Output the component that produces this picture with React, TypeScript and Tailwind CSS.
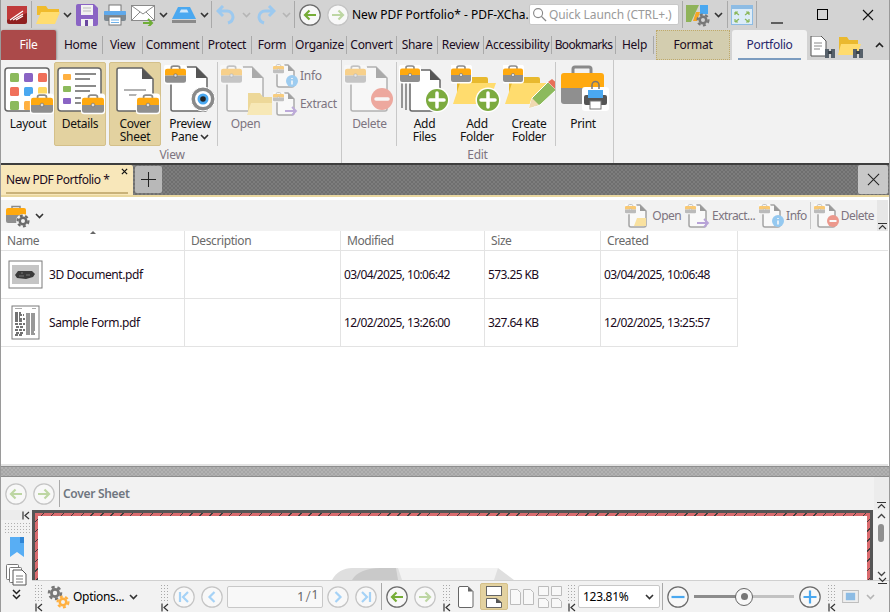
import type { ReactNode } from 'react';

const Case = ({ x, y, s = 1 }: { x: number; y: number; s?: number }) => (
  <g transform={`translate(${x} ${y}) scale(${s})`}>
    <rect x="-1" y="-0.5" width="22" height="19" rx="3" fill="#fff" />
    <path d="M6 4V2.500C6 1.500 7 1 8 1h4c1 0 2 .5 2 1.500V4" fill="none" stroke="#8a8a8a" strokeWidth="1.600" />
    <path d="M0 5.500a2 2 0 0 1 2-2h16a2 2 0 0 1 2 2V10H0z" fill="#ffa90f" />
    <path d="M0 10h20v5a2 2 0 0 1-2 2H2a2 2 0 0 1-2-2z" fill="#8f8f8f" />
    <rect x="8.500" y="8.500" width="3" height="3" rx="1" fill="#ddd" stroke="#666" strokeWidth=".6" />
  </g>
);

const Page = ({ x, y, w, h, c = 10 }: { x: number; y: number; w: number; h: number; c?: number }) => (
  <g>
    <path
      d={`M${x + 2} ${y}H${x + w - c}L${x + w} ${y + c}V${y + h - 2}a2 2 0 0 1-2 2H${x + 2}a2 2 0 0 1-2-2V${y + 2}a2 2 0 0 1 2-2z`}
      fill="#fff"
      stroke="#666"
      strokeWidth="1.500"
    />
    <path d={`M${x + w - c} ${y}L${x + w} ${y + c}H${x + w - c}z`} fill="#555" />
  </g>
);

const Plus = ({ x, y, r = 11 }: { x: number; y: number; r?: number }) => (
  <g>
    <circle cx={x} cy={y} r={r + 1.500} fill="#fff" />
    <circle cx={x} cy={y} r={r} fill="#7cab3f" />
    <path d={`M${x - r + 4} ${y}H${x + r - 4}M${x} ${y - r + 4}V${y + r - 4}`} stroke="#fff" strokeWidth="3.500" strokeLinecap="round" />
  </g>
);

const Folder = ({ x, y }: { x: number; y: number }) => (
  <g transform={`translate(${x} ${y})`}>
    <path d="M4 4h12l3 4h14a2 2 0 0 1 2 2v22H4z" fill="#e8b92e" />
    <path d="M7 14h36l-8 21H0z" fill="#ffdc6e" />
  </g>
);

const Gear = ({ cx, cy, r, color }: { cx: number; cy: number; r: number; color: string }) => (
  <g>
    <circle cx={cx} cy={cy} r={r * 1.2} fill="none" stroke={color} strokeWidth={r * 0.5} strokeDasharray={`${r * 0.65} ${r * 0.55}`} />
    <circle cx={cx} cy={cy} r={r * 0.72} fill="none" stroke={color} strokeWidth={r * 0.55} />
  </g>
);

const Binoculars = () => (
  <g>
    <path d="M15 13h4v9h-4zM21 13h4v9h-4z" fill="#56606a" />
    <rect x="18" y="15" width="4" height="3" fill="#3a424a" />
  </g>
);

const Chev = ({ faded = false }: { faded?: boolean }) => (
  <svg viewBox="0 0 9 6" className="w-[9px] h-[6px] shrink-0">
    <path d="M1 1l3.500 3.500L8 1" fill="none" stroke={faded ? '#b5b5b5' : '#333'} strokeWidth="1.600" />
  </svg>
);

const Grip = () => <div className="w-[9px] h-[17px] shrink-0 bg-[radial-gradient(#a8a8a8_0.8px,transparent_0.9px)] bg-[length:3px_3px]" />;

const Collapse = () => (
  <svg viewBox="0 0 8 9" className="w-[8px] h-[9px] shrink-0">
    <path d="M1 .5v8M7 1L3 4.500 7 8" fill="none" stroke="#333" strokeWidth="1.200" />
  </svg>
);

const GripBlock = () => (
  <div className="flex flex-col items-center gap-[2px] w-[11px] shrink-0 mt-[2px]">
    <Grip />
    <Collapse />
  </div>
);

function Nav({ kind, dark = false, faded = false }: { kind: 'back' | 'fwd' | 'first' | 'prev' | 'next' | 'last' | 'minus' | 'plus'; dark?: boolean; faded?: boolean }) {
  const green = faded ? '#bdd6a3' : '#76ad36';
  const blue = kind === 'minus' || kind === 'plus' ? '#4aa8f0' : '#a5d2f6';
  return (
    <svg viewBox="0 0 22 22" className="w-[22px] h-[22px] shrink-0">
      <circle cx="11" cy="11" r="10.200" fill="#f8f8f8" stroke={dark ? '#6b6b6b' : '#c4c4c4'} strokeWidth="1.200" />
      {kind === 'back' && <path d="M17 11H6M10.500 6.500L6 11l4.500 4.500" fill="none" stroke={green} strokeWidth="2.200" />}
      {kind === 'fwd' && <path d="M5 11h11M11.500 6.500L16 11l-4.500 4.500" fill="none" stroke={green} strokeWidth="2.200" />}
      {kind === 'first' && <path d="M7 6v10M15 6l-5 5 5 5" fill="none" stroke={blue} strokeWidth="2.200" />}
      {kind === 'prev' && <path d="M13.500 6l-5 5 5 5" fill="none" stroke={blue} strokeWidth="2.200" />}
      {kind === 'next' && <path d="M8.500 6l5 5-5 5" fill="none" stroke={blue} strokeWidth="2.200" />}
      {kind === 'last' && <path d="M15 6v10M7 6l5 5-5 5" fill="none" stroke={blue} strokeWidth="2.200" />}
      {kind === 'minus' && <path d="M4.500 11h13" stroke={blue} strokeWidth="2.200" />}
      {kind === 'plus' && <path d="M4.500 11h13M11 4.500v13" stroke={blue} strokeWidth="2.200" />}
    </svg>
  );
}

const TABS: [string, string][] = [
  ['Home', 'w-[44px]'],
  ['View', 'w-[40px]'],
  ['Comment', 'w-[60px]'],
  ['Protect', 'w-[49px]'],
  ['Form', 'w-[41px]'],
  ['Organize', 'w-[54px]'],
  ['Convert', 'w-[50px]'],
  ['Share', 'w-[41px]'],
  ['Review', 'w-[46px]'],
  ['Accessibility', 'w-[68px]'],
  ['Bookmarks', 'w-[64px] tracking-[-0.7px]'],
  ['Help', 'w-[38px]'],
];

const Sep = ({ h = 'h-[27px]' }: { h?: string }) => <div className={`w-px shrink-0 bg-[#a9a9a9] ${h}`} />;

function TitleBar() {
  return (
    <div className="flex items-center h-[29px] pl-[6px] shrink-0 bg-[#d3d3d3]">
      <svg viewBox="0 0 20 18" className="w-[20px] h-[18px] shrink-0">
        <rect width="20" height="18" rx="2" fill="#8f2020" />
        <path d="M0 0h20v7L0 14z" fill="#c03a3a" />
        <path d="M3 14L16 5M6 14l10-6M9 14l7-4" stroke="#fff" strokeWidth="1.200" />
      </svg>
      <div className="w-[4px]" />
      <Sep />
      <svg viewBox="0 0 24 20" className="w-[24px] h-[20px] ml-[4px] shrink-0">
        <path d="M1 1h9l2 3h11v6H1z" fill="#f0bb2c" />
        <path d="M5 7h19l-5 12H0z" fill="#ffdd70" />
      </svg>
      <div className="ml-[3px]"><Chev /></div>
      <svg viewBox="0 0 22 22" className="w-[22px] h-[22px] ml-[4px] shrink-0">
        <path d="M2 0h16l4 4v16a2 2 0 0 1-2 2H2a2 2 0 0 1-2-2V2a2 2 0 0 1 2-2z" fill="#8a64c4" />
        <rect x="5" y="1" width="12" height="10" fill="#f2f2f2" />
        <path d="M7 4h8M7 7h8" stroke="#bbb" />
        <rect x="5" y="15" width="12" height="7" fill="#f2f2f2" />
        <rect x="9" y="16" width="3" height="6" fill="#6a48a0" />
      </svg>
      <svg viewBox="0 0 22 22" className="w-[22px] h-[22px] ml-[6px] shrink-0">
        <rect x="5" y="1" width="12" height="7" fill="#fff" stroke="#777" />
        <rect x="0" y="7" width="22" height="10" rx="2" fill="#7d8890" />
        <rect x="0" y="7" width="22" height="4" rx="1" fill="#5ea9ec" />
        <rect x="5" y="13" width="12" height="8" fill="#fff" stroke="#777" />
        <path d="M7 16h8M7 18.500h8" stroke="#6fb2ea" />
      </svg>
      <svg viewBox="0 0 24 22" className="w-[24px] h-[22px] ml-[5px] shrink-0">
        <rect x=".5" y="1.500" width="23" height="15" fill="#fff" stroke="#8a8a8a" />
        <path d="M1 2l11 8 11-8M1 16l8-8M23 16l-8-8" fill="none" stroke="#8a8a8a" />
        <path d="M12 19h9M17 15l4 4-4 4" fill="none" stroke="#6fae37" strokeWidth="2" />
      </svg>
      <div className="ml-[4px]"><Chev /></div>
      <svg viewBox="0 0 24 18" className="w-[24px] h-[18px] ml-[4px] shrink-0">
        <path d="M6 1h12l6 12H0z" fill="#4aa8f0" />
        <path d="M9 3.500h6l1.500 3h-9z" fill="#cfe7fb" />
        <rect x="0" y="14" width="24" height="3" fill="#8a8a8a" />
      </svg>
      <div className="ml-[4px]"><Chev /></div>
      <div className="w-[2px]" />
      <Sep />
      <svg viewBox="0 0 20 20" className="w-[20px] h-[20px] ml-[4px] shrink-0">
        <path d="M7 1L2 6l5 5M2 6h9a6 6 0 0 1 6 6c0 3-2 5-5 6" fill="none" stroke="#9cc9ef" strokeWidth="3" />
      </svg>
      <div className="ml-[6px]"><Chev faded /></div>
      <svg viewBox="0 0 20 20" className="w-[20px] h-[20px] ml-[5px] shrink-0">
        <path d="M13 1l5 5-5 5M18 6H9a6 6 0 0 0-6 6c0 3 2 5 5 6" fill="none" stroke="#9cc9ef" strokeWidth="3" />
      </svg>
      <div className="ml-[6px]"><Chev faded /></div>
      <div className="w-[3px]" />
      <Sep />
      <div className="ml-[4px]"><Nav kind="back" dark /></div>
      <div className="ml-[6px]"><Nav kind="fwd" faded /></div>
      <span className="ml-[3px] w-[177px] shrink-0 whitespace-nowrap text-[12px] text-black tracking-normal">New PDF Portfolio* - PDF-XCha..</span>
      <div className="flex items-center w-[150px] h-[21px] shrink-0 bg-white border border-[#c8c8c8] rounded-[2px] pl-[2px]">
        <svg viewBox="0 0 16 16" className="w-[15px] h-[15px] shrink-0">
          <circle cx="6.500" cy="6.500" r="4.800" fill="none" stroke="#888" strokeWidth="1.200" />
          <path d="M10 10l5 5" stroke="#888" strokeWidth="1.400" />
        </svg>
        <span className="ml-[2px] whitespace-nowrap text-[12px] text-[#9a9a9a] tracking-[-0.1px]">Quick Launch (CTRL+.)</span>
      </div>
      <div className="w-[3px]" />
      <Sep />
      <svg viewBox="0 0 24 24" className="w-[24px] h-[24px] ml-[3px] shrink-0">
        <path d="M0 2h13L5 19H0z" fill="#8fb35a" />
        <path d="M14 2h8v9h-8z" fill="#4aa8f0" />
        <path d="M10 9h4l-3 9H7z" fill="#f5a623" />
        <Gear cx={17} cy={17} r={4.500} color="#777" />
      </svg>
      <div className="ml-[4px]"><Chev /></div>
      <div className="w-[4px]" />
      <Sep />
      <svg viewBox="0 0 22 20" className="w-[22px] h-[20px] ml-[3px] shrink-0">
        <rect x=".5" y=".5" width="21" height="19" fill="#dcecf8" stroke="#8dbce4" />
        <rect x="1" y="1" width="20" height="3" fill="#8dbce4" />
        <path d="M4 7l4 3M4 7v3M4 7h3M18 7l-4 3M18 7v3M18 7h-3M4 17l4-3M4 17v-3M4 17h3M18 17l-4-3M18 17v-3M18 17h-3" fill="none" stroke="#8ab75a" strokeWidth="1.200" />
      </svg>
      <div className="w-[3px]" />
      <Sep />
      <div className="flex-1 flex items-center justify-end pr-[15px] gap-[34px]">
        <svg viewBox="0 0 12 12" className="w-[12px] h-[12px] shrink-0 mt-[6px]">
          <path d="M0 11h12" stroke="#111" strokeWidth="1.200" />
        </svg>
        <div className="w-[11px] h-[11px] shrink-0 border border-black" />
        <svg viewBox="0 0 12 12" className="w-[12px] h-[12px] shrink-0">
          <path d="M1 1l10 10M11 1L1 11" stroke="#111" strokeWidth="1.100" />
        </svg>
      </div>
    </div>
  );
}

function TabBar() {
  return (
    <div className="flex items-end h-[31px] shrink-0 bg-[#d3d3d3]">
      <div className="flex items-center justify-center w-[55px] h-[30px] shrink-0 bg-[#ab4a4a] text-white text-[12px] rounded-t-[2px] shadow-[1px_0_2px_#999]">
        File
      </div>
      <div className="w-[3px]" />
      <div className="flex items-center h-[30px]">
        {TABS.map(([label, width]) => (
          <div key={label} className={`flex items-center justify-center h-[18px] shrink-0 border-r border-[#a9a9a9] whitespace-nowrap text-[12px] text-[#1a0a20] ${width}`}>
            {label}
          </div>
        ))}
      </div>
      <div className="w-[2px]" />
      <div className="flex items-center justify-center w-[74px] h-[30px] shrink-0 bg-[#d3cdaf] border border-dotted border-[#bfa96a] text-[12px] text-[#1a0a20]">
        Format
      </div>
      <div className="w-[2px]" />
      <div className="relative flex items-center justify-center w-[75px] h-[30px] shrink-0 bg-[#f2f2f2] rounded-t-[3px] text-[12px] text-[#27276b]">
        Portfolio
        <div className="absolute left-[6px] right-[6px] bottom-0 h-[2px] bg-[#7c9cc0]" />
      </div>
      <svg viewBox="0 0 26 22" className="w-[26px] h-[22px] ml-[3px] mb-[2px] shrink-0">
        <path d="M1 0h10l5 5v15H1z" fill="#fff" stroke="#555" />
        <path d="M4 7h8M4 10h8M4 13h6" stroke="#888" />
        <Binoculars />
      </svg>
      <svg viewBox="0 0 26 22" className="w-[26px] h-[22px] ml-[2px] mb-[2px] shrink-0">
        <path d="M1 1h8l2 3h9v14H1z" fill="#eab92f" />
        <path d="M3 8h20l-4 11H0z" fill="#ffdc6e" />
        <Binoculars />
      </svg>
      <div className="flex-1 flex justify-end items-center h-[30px] pr-[5px]">
        <svg viewBox="0 0 9 6" className="w-[9px] h-[6px] rotate-180 shrink-0">
          <path d="M1 1l3.500 3.500L8 1" fill="none" stroke="#222" strokeWidth="1.600" />
        </svg>
      </div>
    </div>
  );
}

function RibbonBtn({ icon, label, width, active = false, faded = false }: { icon: ReactNode; label: ReactNode; width: string; active?: boolean; faded?: boolean }) {
  return (
    <div className={`flex flex-col items-center h-[84px] shrink-0 rounded-[2px] ${width} ${active ? 'pt-[2px] bg-[#e3d2a0] border border-[#d4c08a]' : 'pt-[3px]'}`}>
      <div className={faded ? 'opacity-45' : ''}>{icon}</div>
      <div className={`mt-[2px] text-center text-[12px] leading-[13px] whitespace-nowrap ${faded ? 'text-[#7d7480]' : 'text-[#111]'}`}>{label}</div>
    </div>
  );
}

const Icon48 = ({ children }: { children: ReactNode }) => (
  <svg viewBox="0 0 52 50" className="w-[52px] h-[50px] block">
    {children}
  </svg>
);

function Ribbon() {
  const dots = ['#8cba5c', '#8a64c4', '#f0705a', '#f0705a', '#4aa8f0', '#ffd85e', '#8cba5c', '#ffb040', '#ffb040'];
  return (
    <div className="flex h-[103px] shrink-0 bg-[#f2f2f2] pl-[2px] text-[12px]">
      <div className="flex flex-col w-[339px] shrink-0 border-r border-[#c8c8c8]">
        <div className="flex items-start pt-[2px] gap-px">
          <RibbonBtn
            width="w-[50px]"
            label="Layout"
            icon={
              <Icon48>
                <rect x="3" y="3" width="44" height="43" rx="3" fill="#fff" stroke="#666" strokeWidth="1.500" />
                {dots.map((c, i) => (
                  <rect key={i} x={8 + (i % 3) * 14} y={8 + Math.floor(i / 3) * 14} width="9" height="9" rx="1.500" fill={c} />
                ))}
                <Case x={29} y={29} s={1.100} />
              </Icon48>
            }
          />
          <RibbonBtn
            active
            width="w-[52px]"
            label="Details"
            icon={
              <Icon48>
                <rect x="4" y="3" width="43" height="43" rx="3" fill="#fff" stroke="#666" strokeWidth="1.500" />
                <rect x="9" y="9" width="8" height="6" rx="1" fill="#ffb040" />
                <rect x="9" y="21" width="8" height="6" rx="1" fill="#8cba5c" />
                <rect x="9" y="33" width="8" height="6" rx="1" fill="#8a64c4" />
                <path d="M21 9h21M21 14h15M21 21h21M21 26h15M21 33h7M21 38h7" stroke="#666" strokeWidth="1.600" />
                <Case x={28} y={29} s={1.100} />
              </Icon48>
            }
          />
          <div className="w-px" />
          <RibbonBtn
            active
            width="w-[52px]"
            label={<>Cover<br />Sheet</>}
            icon={
              <Icon48>
                <Page x={8} y={3} w={36} h={43} c={11} />
                <path d="M15 25h22M20 30h11" stroke="#999" strokeWidth="1.500" />
                <Case x={28} y={29} s={1.100} />
              </Icon48>
            }
          />
          <div className="w-px" />
          <RibbonBtn
            width="w-[52px]"
            label={<>Preview<br /><span className="inline-flex items-center gap-[2px]">Pane <Chev /></span></>}
            icon={
              <Icon48>
                <Page x={7} y={2} w={36} h={44} c={11} />
                <Case x={1} y={0} s={1.050} />
                <circle cx="39" cy="34" r="12" fill="#8a8a8a" stroke="#fff" />
                <circle cx="39" cy="34" r="8" fill="#fff" />
                <circle cx="39" cy="34" r="5.500" fill="#4aa8f0" />
                <circle cx="39" cy="34" r="2.800" fill="#222" />
              </Icon48>
            }
          />
          <div className="w-px h-[84px] bg-[#c8c8c8] shrink-0" />
          <RibbonBtn
            faded
            width="w-[53px]"
            label="Open"
            icon={
              <Icon48>
                <Page x={7} y={2} w={36} h={44} c={11} />
                <Case x={1} y={0} s={1.050} />
                <Folder x={24} y={24} />
              </Icon48>
            }
          />
          <div className="flex flex-col gap-[4px] pt-[2px] shrink-0 text-[#7d7480]">
            <div className="flex items-center gap-[1px]">
              <svg viewBox="0 0 26 24" className="w-[26px] h-[24px] opacity-50 shrink-0">
                <Page x={4} y={1} w={17} h={22} c={6} />
                <Case x={0} y={0} s={0.55} />
                <circle cx="19" cy="17" r="6" fill="#4aa8f0" />
                <path d="M19 14v1M19 16.500v4" stroke="#fff" strokeWidth="1.600" />
              </svg>
              <span>Info</span>
            </div>
            <div className="flex items-center gap-[1px]">
              <svg viewBox="0 0 26 24" className="w-[26px] h-[24px] opacity-50 shrink-0">
                <Page x={4} y={1} w={17} h={22} c={6} />
                <Case x={0} y={0} s={0.55} />
                <path d="M12 19h11M19 15l4 4-4 4" fill="none" stroke="#8a64c4" strokeWidth="1.800" />
              </svg>
              <span>Extract</span>
            </div>
          </div>
        </div>
        <div className="text-center text-[12px] text-[#7d7480] leading-[14px] mt-[2px]">View</div>
      </div>
      <div className="flex flex-col w-[272px] shrink-0 border-r border-[#c8c8c8]">
        <div className="flex items-start pt-[2px] pl-[2px]">
          <RibbonBtn
            faded
            width="w-[51px]"
            label="Delete"
            icon={
              <Icon48>
                <Page x={7} y={2} w={36} h={44} c={11} />
                <Case x={1} y={0} s={1.050} />
                <circle cx="38" cy="34" r="11" fill="#e8503a" />
                <path d="M32 34h12" stroke="#fff" strokeWidth="3.500" strokeLinecap="round" />
              </Icon48>
            }
          />
          <div className="w-px h-[84px] ml-[1px] bg-[#c8c8c8] shrink-0" />
          <div className="w-px" />
          <RibbonBtn
            width="w-[53px]"
            label={<>Add<br />Files</>}
            icon={
              <Icon48>
                <Page x={11} y={5} w={30} h={41} c={10} />
                <path d="M7 7v38M3 9v34" stroke="#777" strokeWidth="1.500" />
                <Case x={1} y={0} />
                <Plus x={38} y={35} />
              </Icon48>
            }
          />
          <RibbonBtn
            width="w-[52px]"
            label={<>Add<br />Folder</>}
            icon={
              <Icon48>
                <Folder x={2} y={4} />
                <Case x={0} y={0} />
                <Plus x={37} y={35} />
              </Icon48>
            }
          />
          <RibbonBtn
            width="w-[52px]"
            label={<>Create<br />Folder</>}
            icon={
              <Icon48>
                <Folder x={2} y={4} />
                <Case x={0} y={0} />
                <path d="M26 43l3-10 16-16 8 8-16 15z" fill="#8cba5c" stroke="#fff" />
                <path d="M26 43l3-10 7 7z" fill="#f0d9b0" />
                <path d="M45 17l4-3 6 5-2 6z" fill="#e8705a" />
              </Icon48>
            }
          />
          <div className="w-px h-[84px] bg-[#c8c8c8] shrink-0" />
          <RibbonBtn
            width="w-[54px]"
            label="Print"
            icon={
              <Icon48>
                <path d="M16 8V4a2 2 0 0 1 2-2h14a2 2 0 0 1 2 2v4" fill="none" stroke="#8a8a8a" strokeWidth="3" />
                <path d="M4 11a3 3 0 0 1 3-3h37a3 3 0 0 1 3 3v12H4z" fill="#ffa90f" />
                <path d="M4 23h43v13a3 3 0 0 1-3 3H7a3 3 0 0 1-3-3z" fill="#8f8f8f" />
                <rect x="25" y="22" width="27" height="24" rx="3" fill="#fff" />
                <rect x="27" y="30" width="23" height="10" rx="2" fill="#555" />
                <rect x="31" y="25" width="15" height="8" fill="#4aa8f0" />
                <rect x="33" y="36" width="11" height="8" fill="#fff" stroke="#777" />
                <path d="M35 24v-4a3.500 3.500 0 0 1 7 0v4" fill="none" stroke="#777" strokeWidth="1.500" />
              </Icon48>
            }
          />
        </div>
        <div className="text-center text-[12px] text-[#7d7480] leading-[14px] mt-[2px]">Edit</div>
      </div>
    </div>
  );
}

function DocTabs() {
  return (
    <div className="h-[30px] shrink-0 flex items-start border-t-2 border-[#3e3e3e] bg-[repeating-conic-gradient(#6f6f6f_0_25%,#7d7d7d_0_50%)] bg-[length:4px_4px] box-content">
      <div className="relative flex items-center w-[132px] h-[30px] shrink-0 bg-[#f8e7ba] rounded-tr-[2px] pl-[5px] text-[12px] text-[#1a0a20] tracking-[-0.45px] whitespace-nowrap">
        New PDF Portfolio *
        <svg viewBox="0 0 8 8" className="absolute top-[3px] right-[5px] w-[7px] h-[7px]">
          <path d="M1 1l6 6M7 1L1 7" stroke="#111" strokeWidth="1.400" />
        </svg>
        <div className="absolute left-[5px] right-[5px] bottom-[1px] h-[2px] bg-[#c9b27a]" />
      </div>
      <div className="flex items-center justify-center w-[27px] h-[27px] ml-[2px] mt-[1px] shrink-0 bg-[#b8b8b8] rounded-[2px]">
        <svg viewBox="0 0 16 16" className="w-[15px] h-[15px]">
          <path d="M8 0v16M0 8h16" stroke="#222" strokeWidth="1.100" />
        </svg>
      </div>
      <div className="flex-1" />
      <div className="flex items-center justify-center w-[30px] h-[29px] mr-[1px] shrink-0 bg-[#c8c8c8] rounded-[2px]">
        <svg viewBox="0 0 14 14" className="w-[13px] h-[13px]">
          <path d="M1 1l12 12M13 1L1 13" stroke="#222" strokeWidth="1.100" />
        </svg>
      </div>
    </div>
  );
}

function SmallAction({ label, children, sepBefore = false }: { label: string; children: ReactNode; sepBefore?: boolean }) {
  return (
    <>
      {sepBefore && <div className="w-px h-[27px] mx-[3px] bg-[#c8c8c8] shrink-0" />}
      <div className="flex items-center gap-[1px] shrink-0">
        <svg viewBox="0 0 26 24" className="w-[26px] h-[24px] opacity-55 shrink-0">
          <Page x={4} y={1} w={17} h={22} c={6} />
          <Case x={0} y={0} s={0.55} />
          {children}
        </svg>
        <span className="text-[12px] text-[#7d7480] tracking-[-0.55px] whitespace-nowrap">{label}</span>
      </div>
    </>
  );
}

function PortfolioToolbar() {
  return (
    <div className="flex items-center h-[31px] mt-[3px] shrink-0 bg-[#f2f2f2] pl-[5px] mr-[1px]">
      <svg viewBox="0 0 24 24" className="w-[24px] h-[24px] shrink-0">
        <path d="M6 4V2.500h8V4" fill="none" stroke="#8a8a8a" strokeWidth="1.500" />
        <path d="M0 6a2 2 0 0 1 2-2h16a2 2 0 0 1 2 2v5H0z" fill="#ffa90f" />
        <path d="M0 11h20v6a2 2 0 0 1-2 2H2a2 2 0 0 1-2-2z" fill="#8f8f8f" />
        <circle cx="17" cy="17" r="7" fill="#f2f2f2" />
        <Gear cx={17} cy={17} r={4.500} color="#6b6b6b" />
      </svg>
      <div className="ml-[5px]"><Chev /></div>
      <div className="flex-1" />
      <SmallAction label="Open">
        <path d="M12 14h9v8h-12z" fill="#ffd45c" />
      </SmallAction>
      <div className="w-[4px]" />
      <SmallAction label="Extract...">
        <path d="M12 19h11M19 15l4 4-4 4" fill="none" stroke="#8a64c4" strokeWidth="1.800" />
      </SmallAction>
      <div className="w-[4px]" />
      <SmallAction label="Info">
        <circle cx="19" cy="17" r="6" fill="#4aa8f0" />
        <path d="M19 14v1M19 16.500v4" stroke="#fff" strokeWidth="1.600" />
      </SmallAction>
      <SmallAction label="Delete" sepBefore>
        <circle cx="19" cy="17" r="6" fill="#e8503a" />
        <path d="M15.500 17h7" stroke="#fff" strokeWidth="2" />
      </SmallAction>
      <div className="flex flex-col justify-end items-center self-stretch w-[11px] ml-[3px] bg-[#e6e6e6] pb-[1px]">
        <svg viewBox="0 0 9 7" className="w-[9px] h-[7px]">
          <path d="M0 .500h9M1 6l3.500-3.500L8 6" fill="none" stroke="#333" strokeWidth="1.100" />
        </svg>
      </div>
    </div>
  );
}

const COLUMNS = ['Name', 'Description', 'Modified', 'Size', 'Created'];

function Thumb3D() {
  return (
    <svg viewBox="0 0 36 30" className="w-[36px] h-[30px] shrink-0">
      <rect x="1" y="1" width="33" height="27" fill="#fff" stroke="#7b7b7b" />
      <rect x="4" y="5" width="27" height="19" fill="#c5c5c5" />
      <path d="M10 11h14l3 3-2 3-7 2-9-1-2-3z" fill="#3a3a3a" />
      <path d="M13 13h2M18 15h4M11 16h5" stroke="#777" />
    </svg>
  );
}

function ThumbForm() {
  return (
    <svg viewBox="0 0 36 36" className="w-[36px] h-[36px] shrink-0">
      <rect x="4" y="1" width="27" height="33" fill="#fff" stroke="#7b7b7b" />
      <path d="M7 3.500h7M24 3.500h4" stroke="#aaa" />
      <path d="M7 8h6M7 10h9M7 12h5M7 14h10M7 16h7M7 19h10M8 22h8M7 25h10M8 28h7M7 30h8" stroke="#444" strokeWidth="1.300" strokeDasharray="3 1" />
      <path d="M18 9h10M18 11h10M18 13h10M18 15h10M18 17h9M18 19h10M18 21h10M18 23h10M18 25h10M18 27h8M18 29h9" stroke="#777" strokeWidth="1.300" strokeDasharray="4 1" />
    </svg>
  );
}

function FileRow({ thumb, name, modified, size, created }: { thumb: ReactNode; name: string; modified: string; size: string; created: string }) {
  const cell = 'flex items-center h-[48px] border-r border-b border-[#e3e3e3] text-[12px] text-[#1a0a20] whitespace-nowrap';
  return (
    <>
      <div className={`${cell} pl-[7px] gap-[5px] tracking-[-0.4px]`}>
        <div className="flex justify-center w-[36px] shrink-0">{thumb}</div>
        <span>{name}</span>
      </div>
      <div className={cell} />
      <div className={`${cell} pl-[3px] tracking-[-0.6px]`}>{modified}</div>
      <div className={`${cell} pl-[3px] tracking-[-0.6px]`}>{size}</div>
      <div className={`${cell} pl-[3px] tracking-[-0.6px]`}>{created}</div>
    </>
  );
}

function FileTable() {
  return (
    <div className="flex-1 min-h-0 bg-white border-b-2 border-[#e3e3e3] mr-px">
      <div className="relative h-[20px] border-b border-[#e3e3e3] grid grid-cols-[184px_156px_144px_116px_137px]">
        {COLUMNS.map((c) => (
          <div key={c} className="flex items-center pl-[6px] border-r border-[#e3e3e3] text-[12px] text-[#6a6a6a] tracking-[-0.4px]">
            {c}
          </div>
        ))}
        <svg viewBox="0 0 6 3" className="absolute left-[89px] top-0 w-[6px] h-[3px]">
          <path d="M0 3l3-3 3 3z" fill="#666" />
        </svg>
      </div>
      <div className="grid grid-cols-[184px_156px_144px_116px_137px]">
        <FileRow thumb={<Thumb3D />} name="3D Document.pdf" modified="03/04/2025, 10:06:42" size="573.25 KB" created="03/04/2025, 10:06:48" />
        <FileRow thumb={<ThumbForm />} name="Sample Form.pdf" modified="12/02/2025, 13:26:00" size="327.64 KB" created="12/02/2025, 13:25:57" />
      </div>
    </div>
  );
}

function CoverBar() {
  return (
    <div className="flex items-center h-[33px] shrink-0 bg-[#f2f2f2] pl-[4px]">
      <Nav kind="back" faded />
      <div className="ml-[6px]"><Nav kind="fwd" faded /></div>
      <div className="ml-[4px]"><Sep /></div>
      <span className="ml-[3px] text-[12px] font-semibold text-[#6f7680] whitespace-nowrap">Cover Sheet</span>
      <div className="flex-1" />
      <div className="flex flex-col items-center justify-end self-stretch w-[15px] bg-[#ececec] pb-[1px]">
        <svg viewBox="0 0 9 7" className="w-[9px] h-[7px]">
          <path d="M0 .500h9M1 6l3.500-3.500L8 6" fill="none" stroke="#333" strokeWidth="1.100" />
        </svg>
      </div>
    </div>
  );
}

function Sidebar() {
  return (
    <div className="flex flex-col items-center w-[31px] shrink-0 bg-[#f2f2f2]">
      <div className="flex items-center justify-end self-stretch h-[10px] pr-[2px] bg-[#ececec]">
        <Collapse />
      </div>
      <div className="w-[26px] h-[11px] mt-[2px] bg-[radial-gradient(#b0b0b0_0.8px,transparent_0.9px)] bg-[length:3px_3px]" />
      <svg viewBox="0 0 14 20" className="w-[14px] h-[20px] mt-[4px] shrink-0">
        <path d="M0 0h14v20l-7-5-7 5z" fill="#58aef4" />
        <path d="M10 0h4v6h-4z" fill="#2f86d6" />
      </svg>
      <svg viewBox="0 0 22 22" className="w-[22px] h-[22px] mt-[7px] shrink-0">
        <rect x=".5" y=".5" width="12" height="15" rx="1" fill="#fff" stroke="#777" />
        <rect x="3.500" y="3.500" width="12" height="15" rx="1" fill="#fff" stroke="#777" />
        <path d="M7 6h9l4 4v11H7z" fill="#fff" stroke="#555" />
        <path d="M10 12h7M10 15h7M10 18h7" stroke="#777" />
      </svg>
      <svg viewBox="0 0 9 11" className="w-[9px] h-[11px] mt-[3px] shrink-0">
        <path d="M1 1l3.500 3.500L8 1M1 6l3.500 3.500L8 6" fill="none" stroke="#222" strokeWidth="1.500" />
      </svg>
    </div>
  );
}

function Preview() {
  return (
    <div className="flex h-[70px] shrink-0">
      <div className="flex-1 min-w-0 border-[3px] border-b-0 border-[#555] bg-[repeating-linear-gradient(135deg,#d96b6e_0_6px,#3f3f3f_6px_7px)] pt-[3px] px-[3px]">
        <div className="flex items-end justify-center h-full bg-white">
          <svg viewBox="0 0 182 12" className="w-[182px] h-[12px] shrink-0 -translate-x-[30px]">
            <path d="M0 12C4 4 12 0 20 0h146l16 12z" fill="#dfdfdf" />
            <path d="M20 12C24 4 36 0 48 0h16l2 12z" fill="#c9c9c9" />
            <path d="M66 0h100l-4 12H70z" fill="#f2f2f2" />
          </svg>
        </div>
      </div>
      <div className="flex flex-col items-center justify-between w-[16px] shrink-0 bg-[#f2f2f2] py-[3px]">
        <svg viewBox="0 0 9 6" className="w-[9px] h-[6px] rotate-180 shrink-0">
          <path d="M1 1l3.500 3.500L8 1" fill="none" stroke="#444" strokeWidth="1.300" />
        </svg>
        <div className="w-[6px] h-[18px] -mt-[24px] rounded-full bg-[#8f8f8f]" />
        <svg viewBox="0 0 9 6" className="w-[9px] h-[6px] shrink-0">
          <path d="M1 1l3.500 3.500L8 1" fill="none" stroke="#444" strokeWidth="1.300" />
        </svg>
      </div>
    </div>
  );
}

function StatusBar() {
  return (
    <div className="flex items-center flex-1 min-h-0 bg-[#f2f2f2] pl-[1px] border-t border-[#d0d0d0]">
      <GripBlock />
      <svg viewBox="0 0 24 24" className="w-[24px] h-[24px] shrink-0 ml-[2px]">
        <Gear cx={9} cy={8} r={5} color="#777" />
        <Gear cx={17} cy={17} r={4.500} color="#ffb040" />
      </svg>
      <span className="ml-[3px] w-[51px] shrink-0 text-[12px] text-black whitespace-nowrap">Options...</span>
      <div className="ml-[5px]"><Chev /></div>
      <div className="w-[21px]" />
      <GripBlock />
      <div className="ml-[3px]"><Nav kind="first" /></div>
      <div className="ml-[6px]"><Nav kind="prev" /></div>
      <div className="flex items-center justify-end w-[96px] h-[22px] ml-[4px] pr-[4px] shrink-0 bg-[#f8f8f8] border border-[#c8c8c8] rounded-[2px] text-[#666]">
        <span className="text-[13px] tracking-normal">1</span>
        <span className="text-[15px] mx-[1px] font-light leading-none">/</span>
        <span className="text-[12px] -mt-[3px]">1</span>
      </div>
      <div className="ml-[4px]"><Nav kind="next" /></div>
      <div className="ml-[6px]"><Nav kind="last" /></div>
      <div className="ml-[4px]"><Sep /></div>
      <div className="ml-[4px]"><Nav kind="back" dark /></div>
      <div className="ml-[6px]"><Nav kind="fwd" faded /></div>
      <div className="ml-[5px]"><GripBlock /></div>
      <svg viewBox="0 0 16 22" className="w-[16px] h-[22px] ml-[6px] shrink-0">
        <path d="M2 .5h8l5 5V20a1.500 1.500 0 0 1-1.500 1.500h-11.500A1.500 1.500 0 0 1 .5 20V2A1.500 1.500 0 0 1 2 .5z" fill="#fff" stroke="#666" />
        <path d="M10 .5l5 5h-5z" fill="#666" />
      </svg>
      <div className="flex items-center justify-center w-[28px] h-[27px] ml-[6px] shrink-0 bg-[#e3d2a0] border border-[#d4c08a] rounded-[2px]">
        <svg viewBox="0 0 16 22" className="w-[16px] h-[22px]">
          <rect x=".5" y=".5" width="15" height="9" fill="#fff" stroke="#666" />
          <path d="M.5 12.500h10l5 4v5H.5z" fill="#fff" stroke="#666" />
          <path d="M10 12l6 5h-6z" fill="#555" />
        </svg>
      </div>
      <svg viewBox="0 0 24 16" className="w-[24px] h-[16px] ml-[2px] opacity-50 shrink-0">
        <path d="M.5.5h7l3 3v12h-10zM13.500.5h7l3 3v12h-10z" fill="#fff" stroke="#888" />
      </svg>
      <svg viewBox="0 0 24 22" className="w-[24px] h-[22px] ml-[4px] opacity-50 shrink-0">
        <path d="M.5.5h10v9H.5zM13.500.5h10v9h-10zM.5 12.500h7l3 3v6H.5zM13.500 12.500h7l3 3v6h-10z" fill="#fff" stroke="#888" />
      </svg>
      <div className="ml-[4px]"><GripBlock /></div>
      <div className="flex items-center justify-between w-[82px] h-[23px] ml-[1px] pl-[4px] pr-[5px] shrink-0 bg-white border border-[#c8c8c8] rounded-[2px] text-[12px] text-black">
        123.81%
        <Chev />
      </div>
      <div className="ml-[2px]"><Sep /></div>
      <div className="ml-[4px]"><Nav kind="minus" dark /></div>
      <div className="relative flex items-center w-[100px] h-[20px] ml-[5px] shrink-0">
        <div className="h-[3px] w-[50px] bg-[#8c8c8c]" />
        <div className="h-[3px] w-[50px] bg-[#c2c2c2]" />
        <div className="absolute left-[41px] top-[1px] flex items-center justify-center w-[18px] h-[18px] rounded-full bg-[#f8f8f8] border border-[#666]">
          <div className="w-[7px] h-[7px] rounded-full bg-[#777]" />
        </div>
      </div>
      <div className="ml-[5px]"><Nav kind="plus" dark /></div>
      <div className="ml-[5px]"><GripBlock /></div>
      <svg viewBox="0 0 18 14" className="w-[17px] h-[13px] ml-[5px] shrink-0">
        <rect x=".5" y=".5" width="17" height="13" fill="#eee" stroke="#bbb" />
        <rect x="4" y="3" width="10" height="8" fill="#8dbce4" />
      </svg>
      <div className="ml-[7px]"><Chev faded /></div>
      <div className="flex-1 flex justify-center">
        <svg viewBox="0 0 9 7" className="w-[9px] h-[7px] -mt-[20px]">
          <path d="M0 6.500h9M1 1l3.500 3.500L8 1" fill="none" stroke="#333" strokeWidth="1.100" />
        </svg>
      </div>
    </div>
  );
}

export default function App() {
  return (
    <div className="flex flex-col w-[890px] h-[612px] overflow-hidden bg-white border-x border-[#9a9a9a] tracking-[-0.3px] font-['Noto_Sans','Open_Sans',sans-serif]">
      <TitleBar />
      <TabBar />
      <Ribbon />
      <DocTabs />
      <div className="h-[2px] shrink-0 bg-[#e9d79f]" />
      <PortfolioToolbar />
      <FileTable />
      <div className="h-[11px] shrink-0 border-y border-[#8d8d8d] bg-[repeating-conic-gradient(#a6a6a6_0_25%,#b2b2b2_0_50%)] bg-[length:4px_4px]" />
      <CoverBar />
      <div className="flex h-[102px] shrink-0">
        <Sidebar />
        <div className="flex flex-col flex-1 min-w-0">
          <Preview />
          <StatusBar />
        </div>
      </div>
    </div>
  );
}
